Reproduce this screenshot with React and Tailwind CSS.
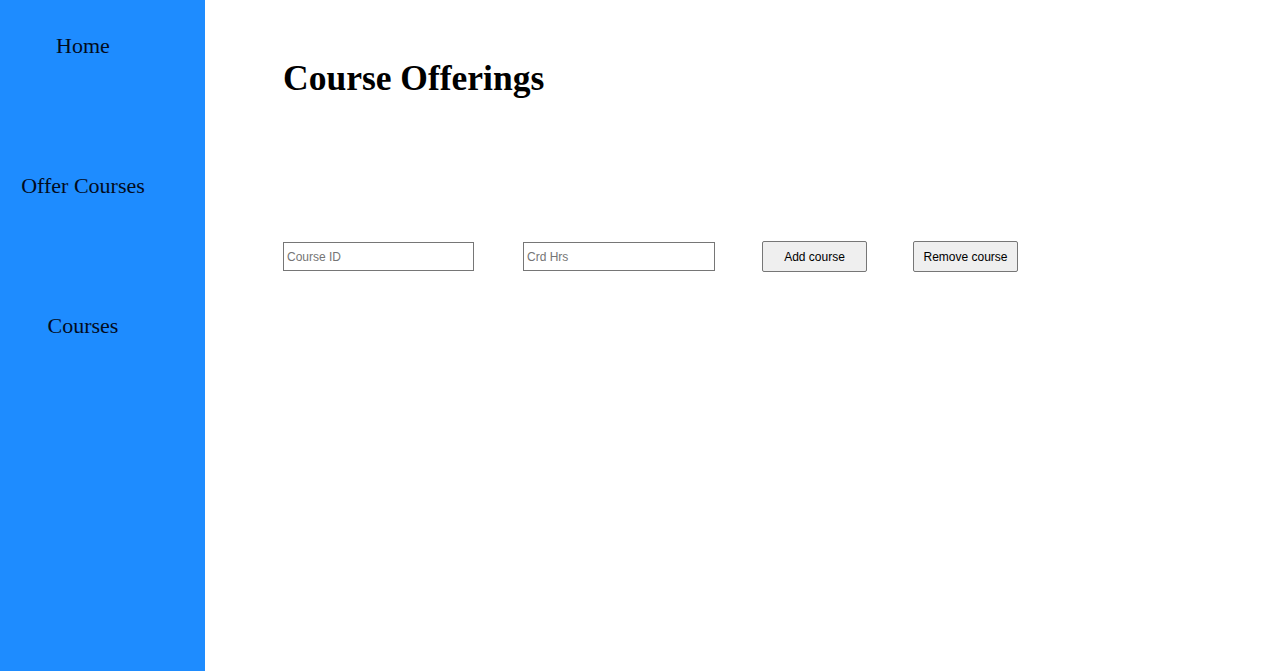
import React from 'react';

const navItems = ['Home', 'Offer Courses', 'Courses'];

const App = () => {
  return (
    <div className="flex min-h-[671px] bg-white font-['Liberation_Serif',serif]">
      {/* Sidebar */}
      <aside className="w-[205px] shrink-0 bg-[#1e8cff]">
        <ul className="w-[166px] pt-[33px]">
          {navItems.map((item) => (
            <li key={item} className="h-[140px] text-center text-[22px] leading-[26px] text-[#020b1c]">
              {item}
            </li>
          ))}
        </ul>
      </aside>

      {/* Main content */}
      <main className="flex-1 pl-[78px] pt-[57px]">
        <h1 className="text-[35.5px] font-bold leading-[42px] text-black">Course Offerings</h1>

        <div className="mt-[142px] flex items-center font-['Liberation_Sans',Arial,sans-serif] text-[12px]">
          <input
            type="text"
            placeholder="Course ID"
            className="h-[29px] w-[191px] border border-[#767676] px-[3px] text-[12px] placeholder:text-[#757575] outline-none"
          />
          <input
            type="text"
            placeholder="Crd Hrs"
            className="ml-[49px] h-[29px] w-[192px] border border-[#767676] px-[3px] text-[12px] placeholder:text-[#757575] outline-none"
          />
          <button className="ml-[47px] h-[31px] w-[105px] rounded-[2px] border border-[#767676] bg-[#efefef] text-[12px] text-black">
            Add course
          </button>
          <button className="ml-[46px] h-[31px] w-[105px] rounded-[2px] border border-[#767676] bg-[#efefef] text-[12px] text-black">
            Remove course
          </button>
        </div>
      </main>
    </div>
  );
};

export default App;
